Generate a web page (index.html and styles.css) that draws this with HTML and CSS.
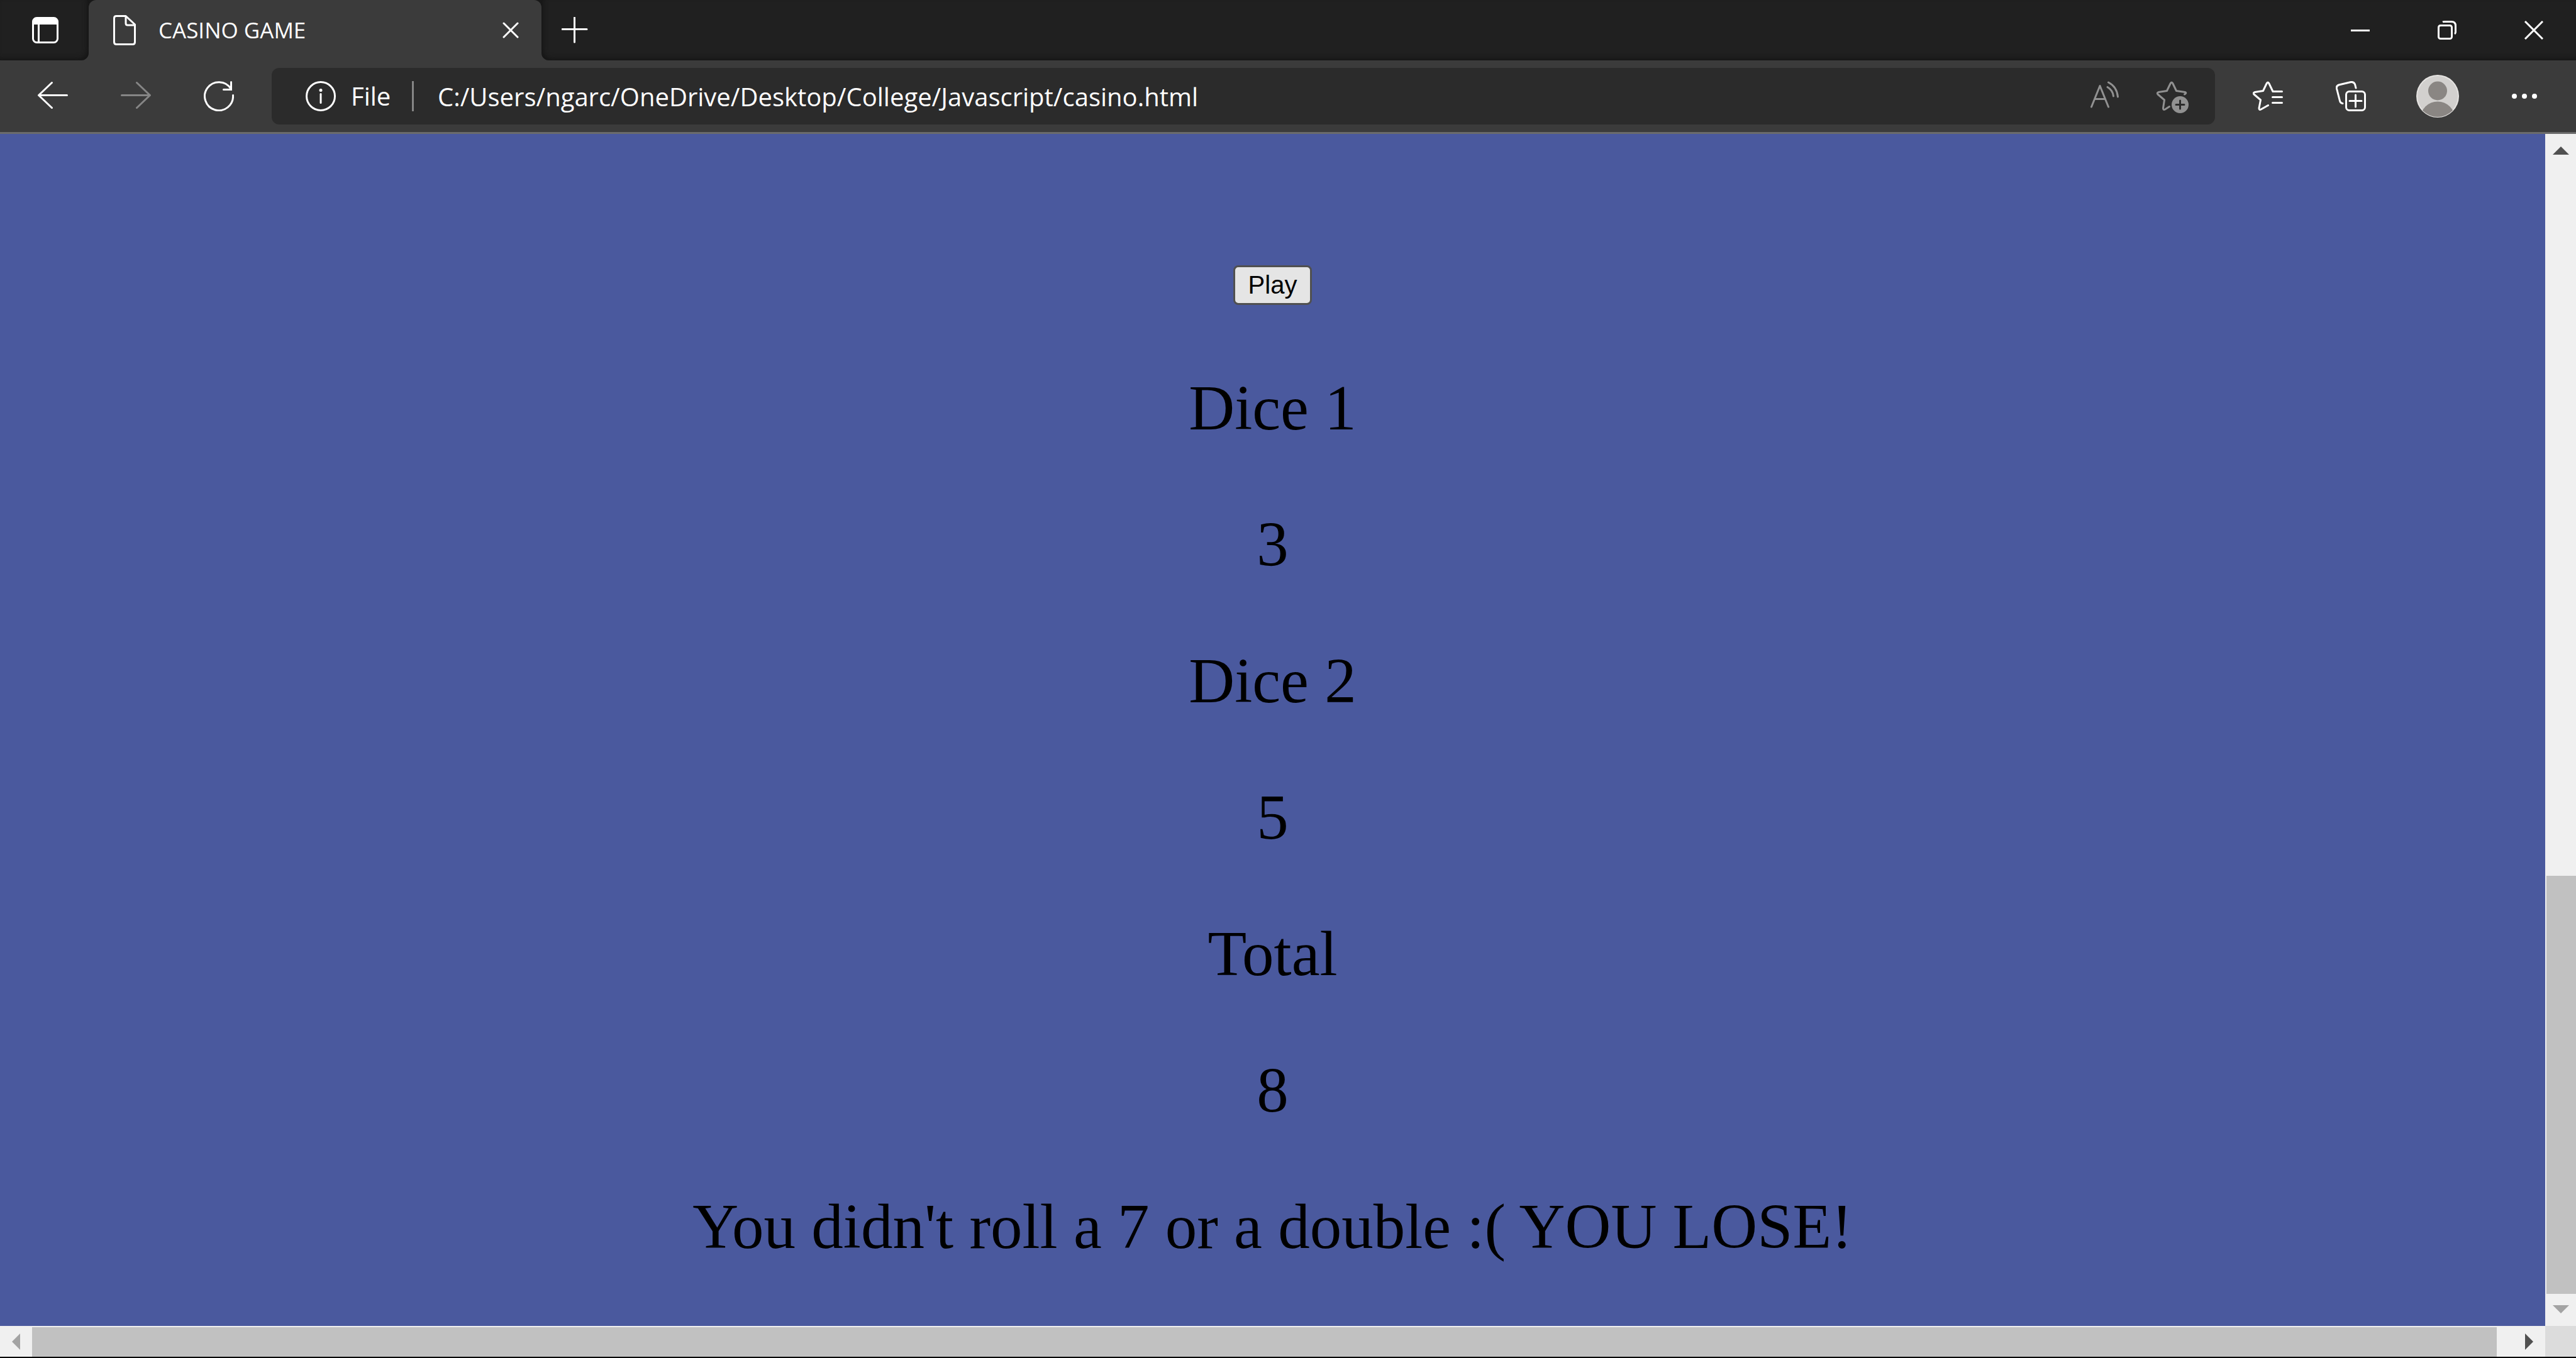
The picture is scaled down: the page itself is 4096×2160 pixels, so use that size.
FILE: index.html
```html
<!DOCTYPE html>
<html lang="en">
<head>
<meta charset="utf-8">
<title>CASINO GAME</title>
<link rel="stylesheet" href="styles.css">
</head>
<body>
<div class="window">
  <header class="titlebar">
    <div class="strip strip-start">
      <button class="icon-btn tab-menu" aria-label="Tab actions">
        <svg width="42" height="42" viewBox="0 0 42 42" fill="none" stroke="currentColor" stroke-width="3"><rect x="1.500" y="1.500" width="39" height="39" rx="6"/><path d="M2 7Q2 2 7 2H35Q40 2 40 7V12H2Z" fill="currentColor" stroke="none"/><path d="M10.500 11V40"/></svg>
      </button>
    </div>
    <div class="tab-slot">
      <div class="tab">
        <svg width="36" height="48" viewBox="0 0 36 48" fill="none" stroke="currentColor" stroke-width="3" stroke-linejoin="round"><path d="M5 1.500H20L34.500 15V43Q34.500 46.500 31 46.500H5Q1.500 46.500 1.500 43V5Q1.500 1.500 5 1.500Z"/><path d="M20 2V13Q20 16 23 16H34"/></svg>
        <span class="tab-title">CASINO GAME</span>
        <button class="icon-btn tab-close" aria-label="Close tab">
          <svg width="26" height="26" viewBox="0 0 26 26" fill="none" stroke="currentColor" stroke-width="3" stroke-linecap="round"><path d="M2 2L24 24M24 2L2 24"/></svg>
        </button>
      </div>
    </div>
    <div class="strip strip-end">
      <button class="icon-btn new-tab" aria-label="New tab">
        <svg width="42" height="42" viewBox="0 0 42 42" fill="none" stroke="currentColor" stroke-width="3" stroke-linecap="round"><path d="M20.500 1V40M1 19.500H40"/></svg>
      </button>
      <div class="window-controls">
        <button class="icon-btn" aria-label="Minimize"><svg width="34" height="30" viewBox="0 0 34 30" fill="none" stroke="currentColor" stroke-width="3"><path d="M4 15.500H34"/></svg></button>
        <button class="icon-btn" aria-label="Restore"><svg width="34" height="30" viewBox="0 0 34 30" fill="none" stroke="currentColor" stroke-width="3"><rect x="5.500" y="7.500" width="21" height="21" rx="3"/><path d="M12 2Q13 1.500 15 1.500H26Q32.500 1.500 32.500 8V18Q32.500 20 31 21"/></svg></button>
        <button class="icon-btn" aria-label="Close"><svg width="34" height="30" viewBox="0 0 34 30" fill="none" stroke="currentColor" stroke-width="3"><path d="M5 1L33 29M33 1L5 29"/></svg></button>
      </div>
    </div>
  </header>

  <nav class="toolbar">
    <button class="icon-btn tool" aria-label="Back"><svg width="48" height="48" viewBox="0 0 48 48" fill="none" stroke="currentColor" stroke-width="3" stroke-linecap="round" stroke-linejoin="round"><path d="M46.500 22.500H2M22.500 2.500L1.500 22.500L22.500 42.500"/></svg></button>
    <button class="icon-btn tool muted" aria-label="Forward" disabled><svg width="48" height="48" viewBox="0 0 48 48" fill="none" stroke="currentColor" stroke-width="3" stroke-linecap="round" stroke-linejoin="round"><path d="M1.500 22.500H46M25.500 2.500L46.500 22.500L25.500 42.500"/></svg></button>
    <button class="icon-btn tool" aria-label="Refresh"><svg width="48" height="48" viewBox="0 0 48 48" fill="none" stroke="currentColor" stroke-width="3" stroke-linecap="round"><path d="M46.500 22.500A22.500 22.500 0 1 1 43 12M43.500 1.500V13.500H31.500"/></svg></button>
    <div class="address">
      <button class="icon-btn site-info">
        <svg width="48" height="48" viewBox="0 0 48 48" fill="none" stroke="currentColor" stroke-width="3"><circle cx="24" cy="24" r="22.500"/><path d="M24 20.500V34.500" stroke-linecap="round"/><circle cx="24" cy="14.500" r="2.500" fill="currentColor" stroke="none"/></svg>
        <span>File</span>
      </button>
      <span class="divider"></span>
      <input class="url" type="text" aria-label="Address" spellcheck="false" value="C:/Users/ngarc/OneDrive/Desktop/College/Javascript/casino.html">
      <button class="icon-btn muted" aria-label="Read aloud"><svg width="48" height="48" viewBox="0 0 48 48" fill="none" stroke="currentColor" stroke-width="3" stroke-linecap="round" stroke-linejoin="round"><path d="M1.500 41L15 7.500L28.500 41M6.500 28.500H23.500M27 9.500Q35.500 14.500 36.500 24M28.500 2Q42 9 43.500 25"/></svg></button>
      <button class="icon-btn muted" aria-label="Add to favorites"><svg class="spill" width="48" height="48" viewBox="0 0 48 48" fill="none" stroke="currentColor" stroke-width="3" stroke-linecap="round" stroke-linejoin="round"><path d="M44.500 21L46 20Q48 18.500 45 17.500L31.500 15.500L26 4Q24 0 22 4L16.500 15.500L3.500 17.500Q0 18.500 2 21L12.500 30L10.500 43Q10.500 46.500 13.500 45L20.500 40.500"/><circle cx="37.500" cy="37.500" r="13.500" fill="currentColor" stroke="none"/><path class="cutout" d="M37.500 31V44M31 37.500H44"/></svg></button>
    </div>
    <button class="icon-btn tool" aria-label="Favorites"><svg width="48" height="48" viewBox="0 0 48 48" fill="none" stroke="currentColor" stroke-width="3" stroke-linecap="round" stroke-linejoin="round"><path d="M46.500 16.500H32L26 4Q24 0 22 4L16.500 15.500L3.500 17.500Q0 18.500 2 21L12.500 30L10 43Q10 46.500 13 45L24.500 38.500M31.500 25.500H46.500M31.500 34.500H46.500"/></svg></button>
    <button class="icon-btn tool" aria-label="Collections"><svg width="48" height="48" viewBox="0 0 48 48" fill="none" stroke="currentColor" stroke-width="3" stroke-linecap="round"><path d="M11 35.500Q7.500 35.500 6.500 31.500L1.500 12Q0.500 7.500 5 6L23 1.700Q28.500 0.500 30.500 5L32 11"/><rect x="16.500" y="16.500" width="30" height="30" rx="5"/><path d="M31.500 22V41M22 31.500H41"/></svg></button>
    <button class="icon-btn tool profile" aria-label="Profile"><svg width="68" height="68" viewBox="0 0 68 68"><clipPath id="disc"><circle cx="34" cy="34" r="33"/></clipPath><circle cx="34" cy="34" r="34" fill="#e6e4e2"/><circle cx="34" cy="34" r="32" fill="#d2d0ce"/><g clip-path="url(#disc)" fill="#8a8683"><circle cx="34" cy="25.500" r="15"/><circle cx="34" cy="70" r="27.500"/></g></svg></button>
    <button class="icon-btn tool" aria-label="Settings and more"><svg width="40" height="8" viewBox="0 0 40 8" fill="currentColor"><circle cx="4" cy="4" r="4"/><circle cx="20" cy="4" r="4"/><circle cx="36" cy="4" r="4"/></svg></button>
  </nav>

  <div class="viewport">
    <main class="page">
      <button class="play">Play</button>
      <p>Dice 1</p>
      <p>3</p>
      <p>Dice 2</p>
      <p>5</p>
      <p>Total</p>
      <p>8</p>
      <p>You didn't roll a 7 or a double :( YOU LOSE!</p>
    </main>
    <div class="scroll-v">
      <svg width="26" height="13" viewBox="0 0 26 13"><path d="M13 0L26 13H0Z" fill="#505050"/></svg>
      <div class="track-v"><div class="gap-v"></div><div class="thumb-v"></div></div>
      <svg width="26" height="13" viewBox="0 0 26 13"><path d="M0 0H26L13 13Z" fill="#a3a3a3"/></svg>
    </div>
    <div class="scroll-h">
      <svg width="13" height="26" viewBox="0 0 13 26"><path d="M13 0V26L0 13Z" fill="#a3a3a3"/></svg>
      <div class="thumb-h"></div>
      <svg width="13" height="26" viewBox="0 0 13 26"><path d="M0 0L13 13L0 26Z" fill="#505050"/></svg>
    </div>
    <div class="corner"></div>
  </div>
</div>
</body>
</html>
```
FILE: styles.css
```css
* {
  box-sizing: border-box;
}

body {
  margin: 0;
  font-family: "Open Sans", "Noto Sans", sans-serif;
  color: #fff;
  background: #000;
}

svg {
  display: block;
  flex: none;
}

.window {
  display: flex;
  flex-direction: column;
  min-height: 100vh;
  border-bottom: 2px solid #000;
}

.icon-btn {
  display: flex;
  align-items: center;
  justify-content: center;
  flex: none;
  padding: 0;
  border: 0;
  background: none;
  color: #fff;
  font: inherit;
}

.icon-btn.muted {
  color: #919191;
}

/* Title bar */
.titlebar {
  display: flex;
  height: 96px;
  background: #3b3b3b;
}

.strip {
  display: flex;
  align-items: center;
  background: #202020;
}

.strip-start {
  width: 141px;
  padding-left: 51px;
  border-bottom-right-radius: 12px;
  box-shadow: inset -4px -4px 8px -2px #141414;
}

.strip-end {
  flex: 1;
  justify-content: space-between;
  padding-left: 32px;
  border-bottom-left-radius: 12px;
  box-shadow: inset 4px -4px 8px -2px #141414;
}

.tab-slot {
  width: 720px;
  background: linear-gradient(#181818 50%, #3b3b3b 50%);
}

.tab {
  display: flex;
  align-items: center;
  height: 96px;
  padding: 0 36px 0 39px;
  border-radius: 12px 12px 0 0;
  background: #3b3b3b;
}

.tab-title {
  flex: 1;
  padding-left: 36px;
  font-size: 35px;
  line-height: 48px;
}

.window-controls {
  display: flex;
}

.window-controls .icon-btn {
  width: 138px;
  height: 96px;
}

/* Toolbar */
.toolbar {
  display: flex;
  align-items: center;
  height: 117px;
  padding: 0 16px 0 18px;
  border-bottom: 3px solid #6b6b6b;
  background: #3b3b3b;
}

.tool {
  width: 132px;
  height: 90px;
}

.toolbar .tool.muted {
  color: #868686;
}

.profile {
  margin: 0 6px;
}

.address {
  display: flex;
  align-items: center;
  flex: 1;
  height: 90px;
  margin: 0 18px;
  padding: 0 45px 0 54px;
  border-radius: 12px;
  background: #2b2b2b;
}

.address .muted + .muted {
  margin-left: 57px;
}

.site-info {
  gap: 24px;
  font-size: 40px;
  line-height: 60px;
}

.site-info span {
  width: 97px;
  text-align: left;
}

.divider {
  width: 3px;
  height: 48px;
  background: #868686;
}

.url {
  flex: 1;
  min-width: 0;
  height: 60px;
  padding: 0 38px;
  border: 0;
  outline: 0;
  background: none;
  color: #fff;
  font: inherit;
  font-size: 40px;
}

.spill {
  overflow: visible;
}

.cutout {
  stroke: #2b2b2b;
}

/* Page area and its scroll bars */
.viewport {
  display: grid;
  flex: 1;
  grid-template-columns: 1fr 49px;
  grid-template-rows: 1fr 49px;
}

.page {
  padding: 209px 0 0;
  background: #4a599e;
  color: #000;
  font-family: "Liberation Serif", "Times New Roman", serif;
  font-size: 101px;
  line-height: 116px;
  text-align: center;
}

.page p {
  margin: 0 0 101px;
}

.page p:last-child {
  margin-bottom: 97px;
}

.play {
  display: block;
  height: 63px;
  margin: 0 auto 106px;
  padding: 0 21px;
  border: 3px solid #505050;
  border-radius: 8px;
  background: #e5e5e5;
  color: #000;
  font-family: "Liberation Sans", Arial, sans-serif;
  font-size: 40px;
  line-height: 57px;
}

.scroll-v {
  display: flex;
  flex-direction: column;
  align-items: center;
  padding: 20px 0;
  background: #f0f0f0;
}

.track-v {
  display: flex;
  flex: 1;
  flex-direction: column;
  align-self: stretch;
  margin: 18px 0 18px 2px;
}

.gap-v {
  flex: 1129;
}

.thumb-v {
  flex: 665;
  background: #c1c1c1;
}

.scroll-h {
  display: flex;
  align-items: center;
  padding: 0 19px;
  background: #f0f0f0;
}

.thumb-h {
  flex: 1;
  align-self: stretch;
  margin: 2px 45px 0 19px;
  background: #c1c1c1;
}

.corner {
  background: #dcdcdc;
}
```
